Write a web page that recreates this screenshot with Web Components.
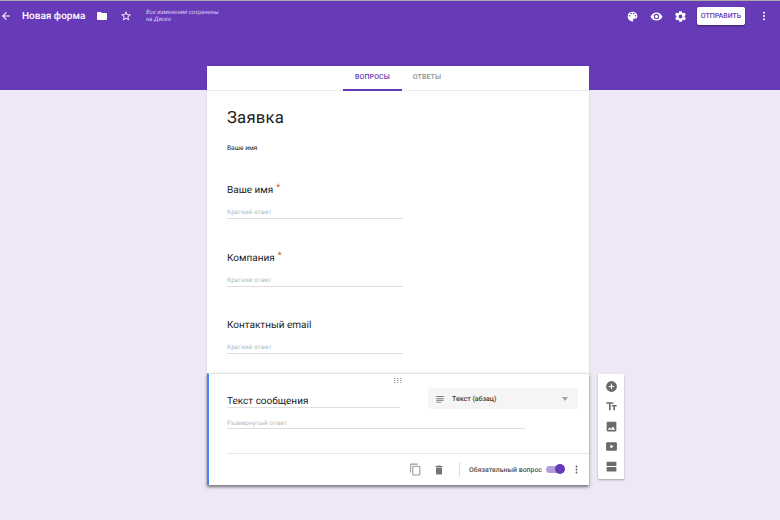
<!DOCTYPE html>
<html lang="ru"><head><meta charset="utf-8"><title>Новая форма</title>
<style>
html,body{margin:0;padding:0;width:780px;height:520px;overflow:hidden;background:#ede7f6;font-family:Roboto,"Liberation Sans",sans-serif;text-rendering:geometricPrecision}
</style></head><body>
<form-app></form-app>
<script>
const P={
back:'<path d="M20 11H7.8l5.6-5.6L12 4l-8 8 8 8 1.4-1.4L7.8 13H20z"/>',
folder:'<path d="M10 4H4a2 2 0 0 0-2 2v12a2 2 0 0 0 2 2h16a2 2 0 0 0 2-2V8a2 2 0 0 0-2-2h-8z"/>',
star:'<path d="M22 9.2l-7.2-.6L12 2 9.2 8.6 2 9.2l5.5 4.7L5.8 21l6.2-3.7 6.2 3.7-1.6-7.1zM12 15.4l-3.8 2.3 1-4.3-3.3-2.9 4.4-.4L12 6.100l1.700 4 4.400.4-3.300 2.900 1 4.300z"/>',
palette:'<path d="M12 3a9 9 0 0 0 0 18 1.500 1.500 0 0 0 1.100-2.500 1.500 1.500 0 0 1 1.100-2.500H16a5 5 0 0 0 5-5c0-4.400-4-8-9-8zM6.500 12a1.500 1.500 0 1 1 0-3 1.500 1.500 0 0 1 0 3zm3-4a1.500 1.500 0 1 1 0-3 1.500 1.500 0 0 1 0 3zm5 0a1.500 1.500 0 1 1 0-3 1.500 1.500 0 0 1 0 3zm3 4a1.500 1.500 0 1 1 0-3 1.500 1.500 0 0 1 0 3z"/>',
eye:'<path d="M12 4.500C7 4.500 2.700 7.600 1 12c1.700 4.400 6 7.500 11 7.500s9.300-3.100 11-7.500c-1.700-4.400-6-7.500-11-7.500zM12 17a5 5 0 1 1 0-10 5 5 0 0 1 0 10zm0-8a3 3 0 1 0 0 6 3 3 0 0 0 0-6z"/>',
gear:'<path d="M19.400 13c0-.3.100-.6.100-1s0-.7-.1-1l2.100-1.600c.2-.2.200-.4.100-.6l-2-3.500c-.1-.2-.4-.3-.6-.2l-2.500 1c-.5-.4-1.100-.7-1.700-1l-.4-2.600c0-.3-.2-.4-.5-.4h-4c-.3 0-.5.100-.5.400l-.4 2.600c-.6.300-1.200.6-1.700 1l-2.500-1c-.2-.1-.5 0-.6.200l-2 3.500c-.1.200-.1.400.1.600L4.600 11c0 .3-.1.700-.1 1s0 .7.100 1l-2.100 1.600c-.2.200-.2.400-.1.600l2 3.500c.1.200.4.300.6.200l2.500-1c.5.400 1.100.7 1.700 1l.4 2.600c0 .3.200.4.500.4h4c.3 0 .5-.1.500-.4l.4-2.600c.6-.3 1.200-.6 1.700-1l2.500 1c.2.100.5 0 .6-.2l2-3.500c.1-.2.1-.4-.1-.6zM12 15.500a3.500 3.500 0 1 1 0-7 3.500 3.500 0 0 1 0 7z"/>',
more:'<circle cx="12" cy="5.500" r="2"/><circle cx="12" cy="12" r="2"/><circle cx="12" cy="18.500" r="2"/>',
lines:'<path d="M3 5h18v2H3zM3 9.500h18v2H3zM3 14h18v2H3zM3 18.500h12v2H3z"/>',
copy:'<path d="M16 1H4a2 2 0 0 0-2 2v14h2V3h12zm3 4H8a2 2 0 0 0-2 2v14a2 2 0 0 0 2 2h11a2 2 0 0 0 2-2V7a2 2 0 0 0-2-2zm0 16H8V7h11z"/>',
trash:'<path d="M6 19a2 2 0 0 0 2 2h8a2 2 0 0 0 2-2V7H6zM19 4h-3.500l-1-1h-5l-1 1H5v2h14z"/>',
plus:'<path d="M12 2a10 10 0 1 0 0 20 10 10 0 0 0 0-20zm5 11h-4v4h-2v-4H7v-2h4V7h2v4h4z"/>',
tt:'<path d="M2.500 4v3h5v12h3V7h5V4zm19 5h-9v3h3v7h3v-7h3z"/>',
img:'<path d="M21 19V5a2 2 0 0 0-2-2H5a2 2 0 0 0-2 2v14a2 2 0 0 0 2 2h14a2 2 0 0 0 2-2zM8.500 13.500l2.500 3 3.500-4.500 4.500 6H5z"/>',
video:'<path d="M20 4H4a2 2 0 0 0-2 2v12a2 2 0 0 0 2 2h16a2 2 0 0 0 2-2V6a2 2 0 0 0-2-2zm-10 11.500v-7l6 3.500z"/>',
section:'<path d="M3 3h18v8H3zM3 13h18v8H3z"/>'
};
function def(n,css,html){customElements.define(n,class extends HTMLElement{connectedCallback(){if(this.shadowRoot)return;const s=this.attachShadow({mode:'open'});s.innerHTML='<style>'+css+'</style>'+(typeof html==='function'?html(this):html);}})}
def('x-icon',':host{display:inline-flex;flex:none}svg{display:block;fill:currentColor}',h=>{const z=h.getAttribute('size')||20;return `<svg width="${z}" height="${z}" viewBox="0 0 24 24">${P[h.getAttribute('name')]}</svg>`});
def('top-bar',`:host{display:block;height:90px;box-sizing:border-box;background:#673ab7;border-top:1px solid #a9a9a9;color:#fff}
.r{display:flex;align-items:center;height:30px}
.t{font-size:10px;font-weight:500;margin-left:10px;width:64px;white-space:nowrap}
.s{font-size:6px;line-height:7px;font-style:italic;color:#d9cdef;margin-left:14px;white-space:nowrap}
.sp{flex:1}
.b{width:48px;height:18px;background:#fff;border-radius:2px;box-shadow:0 1px 2px rgba(0,0,0,.4);color:#673ab7;font-size:7px;font-weight:500;display:flex;align-items:center;justify-content:center;white-space:nowrap;margin:0 13px 0 10.500px}
`,`<div class="r"><x-icon name="back" size="12"></x-icon>
<span class="t">Новая форма</span>
<x-icon name="folder" size="12" style="margin-left:10px"></x-icon>
<x-icon name="star" size="12" style="margin-left:12px"></x-icon>
<span class="s">Все изменения сохранены<br>на Диске</span><span class="sp"></span>
<x-icon name="palette" size="13"></x-icon><x-icon name="eye" size="13" style="margin-left:11px"></x-icon><x-icon name="gear" size="13" style="margin-left:11px"></x-icon>
<span class="b">ОТПРАВИТЬ</span><x-icon name="more" size="12" style="margin-right:10px"></x-icon></div>`);
def('form-tabs',`:host{display:flex;height:24px;border-bottom:1px solid #ececec;padding-left:136px}
span{font-size:7px;font-weight:500;width:59px;display:flex;align-items:center;justify-content:center;box-sizing:border-box;color:#8e8e8e;height:25px;letter-spacing:.1px;padding-bottom:3px}
.a{color:#673ab7;border-bottom:2px solid #673ab7;padding-bottom:1px}
.o{width:50px}`,`<span class="a">ВОПРОСЫ</span><span class="o">ОТВЕТЫ</span>`);
def('form-question',`:host{display:block;height:67.500px;box-sizing:border-box;padding:0 20px}
.q{font-size:10px;line-height:14px;height:14px;color:#212121;font-weight:400}
.q i{color:#db4437;font-style:normal;font-size:9px;line-height:0;vertical-align:3px;margin-left:3px}
.a{width:176px;margin-top:9px;box-sizing:border-box;height:12px;border-bottom:1px solid #dcdcdc;font-size:6.400px;line-height:11px;color:#b5b5b5;letter-spacing:.1px}`,
h=>`<div class="q"><slot></slot>${h.hasAttribute('required')?'<i>*</i>':''}</div><div class="a">Краткий ответ</div>`);
def('active-card',`:host{display:block;position:relative;box-sizing:border-box;height:112px;background:#fff;border-left:2px solid #4285f4;border-top:1px solid #e2e2e2;box-shadow:0 2px 3px rgba(0,0,0,.5);padding:0 0 0 18px}
.d{display:flex;justify-content:center;color:#a5a5a5;height:10px;padding-top:4px;box-sizing:border-box;margin-left:-20px}
.top{display:flex;height:27px;align-items:flex-start}
.q{width:173px;height:16px;margin-top:8px;border-bottom:1px solid #e0e0e0;font-size:10px;line-height:19px;color:#212121;box-sizing:border-box}
.sel{width:150px;height:21px;margin:4px 0 0 28px;background:#f5f5f5;border-radius:2px;display:flex;align-items:center;font-size:7px;font-weight:500;box-sizing:border-box;padding:0 10px 0 7px;color:#424242}
.sel x-icon{color:#757575;margin-right:7px}.sel b{margin-left:auto;width:0;height:0;border:3.500px solid transparent;border-top:4px solid #a0a0a0;border-bottom:0}
.a{width:298px;height:14px;margin-top:4px;border-bottom:1px solid #dedede;box-sizing:border-box;font-size:6.400px;line-height:17px;color:#b5b5b5;letter-spacing:.1px}
.hr{height:1px;background:#e6e6e6;margin-top:24px}
.f{display:flex;align-items:center;height:31px;color:#757575;padding-right:7px}
.sp{flex:1}.sep{width:1px;height:15px;background:#e0e0e0;margin:0 9px 0 14px}
.l{font-size:6.950px;font-weight:500;color:#555;white-space:nowrap}
.sw{position:relative;width:18px;height:7px;background:#b39ddb;border-radius:4px;margin:0 4px 0 4px}.sw::after{content:"";position:absolute;right:-1px;top:-2px;width:10px;height:10px;border-radius:50%;background:#673ab7}`,
`<div class="d"><svg width="8" height="5" viewBox="0 0 8 5" fill="currentColor"><path d="M0 0h1.500v1H0zM3 0h1.500v1H3zM6 0h1.500v1H6zM0 2h1.500v1H0zM3 2h1.500v1H3zM6 2h1.500v1H6zM0 4h1.500v1H0zM3 4h1.500v1H3zM6 4h1.500v1H6z"/></svg></div>
<div class="top"><div class="q">Текст сообщения</div><div class="sel"><x-icon name="lines" size="10"></x-icon>Текст (абзац)<b></b></div></div>
<div class="a">Развернутый ответ</div><div class="hr"></div>
<div class="f"><span class="sp"></span><x-icon name="copy" size="13" style="color:#9a9a9a"></x-icon><x-icon name="trash" size="12" style="margin-left:11px"></x-icon><span class="sep"></span><span class="l">Обязательный вопрос</span><span class="sw"></span><x-icon name="more" size="11" style="margin-left:3px;color:#616161"></x-icon></div>`);
def('side-tools',`:host{display:flex;flex-direction:column;align-items:center;width:26px;height:105px;box-sizing:border-box;padding:6px 0;justify-content:space-between;background:#fff;box-shadow:0 1px 2px rgba(0,0,0,.3);color:#6a6a6a;border-radius:1px}`,
`<x-icon name="plus" size="13"></x-icon><x-icon name="tt" size="13"></x-icon><x-icon name="img" size="13"></x-icon><x-icon name="video" size="13"></x-icon><x-icon name="section" size="13"></x-icon>`);
def('form-app',`:host{display:block;height:520px;overflow:hidden}
.w{display:flex;align-items:flex-start;margin:-24px 0 0 207px}
.c{width:382px;flex:none}
.p{background:#fff;height:307px;box-shadow:0 0 2px rgba(0,0,0,.12)}
.h{padding:18px 20px 0;height:93px;box-sizing:border-box}
h1{margin:0;font-size:16.700px;font-weight:400;line-height:20px;color:#212121;letter-spacing:.2px}
.d{font-size:6.600px;line-height:10px;margin-top:14px;color:#222}
side-tools{margin:308px 0 0 9px}`,
`<top-bar></top-bar><div class="w"><div class="c"><div class="p"><form-tabs></form-tabs><div class="h"><h1>Заявка</h1><div class="d">Ваше имя</div></div>
<form-question required>Ваше имя</form-question><form-question required>Компания</form-question><form-question>Контактный email</form-question></div>
<active-card></active-card></div><side-tools></side-tools></div>`);
</script></body></html>
